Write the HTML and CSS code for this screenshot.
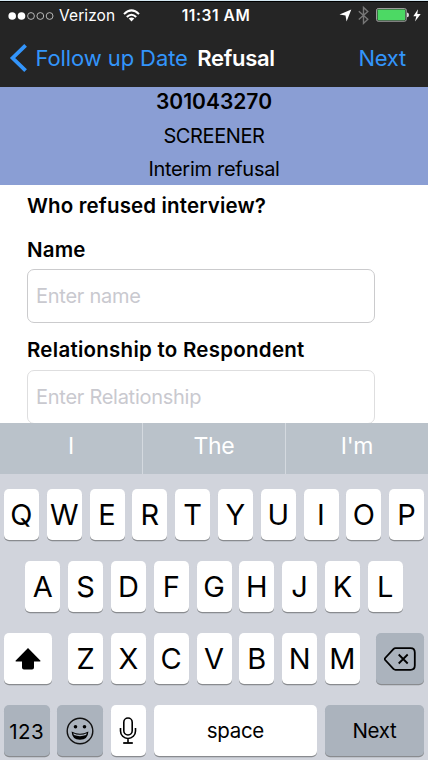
FILE: index.html
```html
<!DOCTYPE html>
<html lang="en">
<head>
<meta charset="utf-8">
<title>Refusal</title>
<link rel="stylesheet" href="styles.css">
</head>
<body>
<header class="header">
  <div class="status">
    <div class="carrier">
      <svg class="signal" width="47" height="10" viewBox="0 0 47 10"><g fill="#fff"><circle cx="4.2" cy="5" r="3.8"/><circle cx="13.5" cy="5" r="3.8"/></g><g fill="none" stroke="#c5c5c5" stroke-width=".9"><circle cx="23" cy="5" r="3.4"/><circle cx="32.3" cy="5" r="3.4"/><circle cx="41.6" cy="5" r="3.4"/></g></svg>
      <span class="carrier-name">Verizon</span>
      <svg class="wifi" width="17" height="13" viewBox="0 0 17 13"><g fill="none" stroke="#fff" stroke-width="2"><path d="M1 5.1Q8.5-2.3 16 5.1"/><path d="M3.8 8Q8.5 3.4 13.2 8"/></g><path d="M5.7 9.6Q8.5 7.3 11.3 9.6L8.5 12.6Z" fill="#fff"/></svg>
    </div>
    <span class="clock">11:31 AM</span>
    <div class="indicators">
      <svg class="location" width="13" height="13" viewBox="0 0 13 13"><path d="M12.3.4L7.6 12.4 6.5 6.6.5 5.5Z" fill="#fff"/></svg>
      <svg class="bluetooth" width="11" height="19" viewBox="0 0 11 19"><path d="M.8 5.2L9.8 13.3 5.5 17.4V1.4L9.8 5.4.8 13.4" fill="none" stroke="#777" stroke-width="1.4"/></svg>
      <svg class="battery" width="33" height="14" viewBox="0 0 33 14"><rect x=".6" y=".6" width="29.6" height="12.6" rx="1.5" fill="#222" stroke="#aaa" stroke-width="1"/><rect x="1.6" y="1.6" width="27.6" height="10.6" rx=".7" fill="#4cd964"/><path d="M31 4.5q2 .3 2 2.4t-2 2.4Z" fill="#ddd"/></svg>
      <svg class="bolt" width="8" height="13" viewBox="0 0 8 13"><path d="M5 .3L.3 7.2H3.3L2 12.5 7.7 5.1H4.3Z" fill="#fff"/></svg>
    </div>
  </div>
  <nav class="nav">
    <a class="back"><svg width="18" height="28" viewBox="0 0 18 28"><path d="M16.6 1.4L3.6 14 16.6 26.6" fill="none" stroke="#3395fb" stroke-width="3.8"/></svg><span class="back-label">Follow up Date</span></a>
    <h1 class="title">Refusal</h1>
    <a class="next">Next</a>
  </nav>
</header>
<section class="banner">
  <strong class="case-id">301043270</strong>
  <span class="stage">SCREENER</span>
  <span class="outcome">Interim refusal</span>
</section>
<main class="form">
  <h2 class="question">Who refused interview?</h2>
  <div class="label label-name">Name</div>
  <div class="field"><span class="hint-name">Enter name</span></div>
  <div class="label label-relation">Relationship to Respondent</div>
  <div class="field field-second"><span class="hint-relation">Enter Relationship</span></div>
</main>
<section class="keyboard">
  <div class="suggestions"><span>I</span><span>The</span><span>I'm</span></div>
  <div class="keys">
    <div class="row"><b>Q</b><b>W</b><b>E</b><b>R</b><b>T</b><b>Y</b><b>U</b><b>I</b><b>O</b><b>P</b></div>
    <div class="row"><b>A</b><b>S</b><b>D</b><b>F</b><b>G</b><b>H</b><b>J</b><b>K</b><b>L</b></div>
    <div class="row row-spread">
      <b class="wide"><svg width="26" height="22" viewBox="0 0 26 22"><path d="M13 0L25.5 12.7Q25.6 13.4 25 13.4H19V19.5Q19 21.5 17 21.5H9Q7 21.5 7 19.5V13.4H1Q.4 13.4.5 12.7Z"/></svg></b>
      <div class="row letters"><b>Z</b><b>X</b><b>C</b><b>V</b><b>B</b><b>N</b><b>M</b></div>
      <b class="wide dark"><svg width="32" height="24" viewBox="0 0 32 24"><g fill="none" stroke="#000" stroke-width="1.8" stroke-linejoin="round"><path d="M11.5 1.2H26.5Q30.8 1.2 30.8 5.5V18.5Q30.8 22.8 26.5 22.8H11.5Q10.3 22.8 9.4 21.9L1.2 13Q.4 12 1.2 11L9.4 2.1Q10.3 1.2 11.5 1.2Z"/><path d="M14.7 7.5L23.7 16.5M23.7 7.5L14.7 16.5"/></g></svg></b>
    </div>
    <div class="row">
      <b class="fn dark numbers">123</b>
      <b class="fn dark"><svg width="28" height="28" viewBox="0 0 28 28"><circle cx="14" cy="14" r="12.8" fill="none" stroke="#111" stroke-width="1.4"/><circle cx="9.5" cy="9.8" r="1.8"/><circle cx="18.5" cy="9.8" r="1.8"/><path d="M5.6 14.4Q14 19 22.4 14.4Q22 22.7 14 22.7T5.6 14.4Z"/><path d="M7.2 16.3Q14 19.3 20.8 16.3L20.1 18.1Q14 20.3 7.9 18.1Z" fill="#abb3bd"/></svg></b>
      <b><svg class="mic" width="18" height="28" viewBox="0 0 18 28"><g fill="none" stroke="#000" stroke-width="1.6"><rect x="4.8" y="1" width="8.4" height="17" rx="4.2"/><path d="M1.5 11V14A7.5 7.5 0 0 0 16.5 14V11M9 21.5V25.8"/><path d="M4.2 26H13.8" stroke-width="1.8"/></g></svg></b>
      <b class="space">space</b>
      <b class="go dark">Next</b>
    </div>
  </div>
</section>
</body>
</html>
```
FILE: styles.css
```css
* { box-sizing: border-box; }
body { margin: 0; width: 428px; height: 760px; overflow: hidden; display: flex; flex-direction: column; background: #fff; color: #000; font-family: Inter, "Liberation Sans", sans-serif; font-size: 20px; line-height: 24px; white-space: nowrap; }
svg { display: block; flex: none; }
h1, h2 { margin: 0; font-weight: 600; }

.header { height: 87px; flex: none; background: #252525; border-top: 1px solid #d5e8f2; color: #fff; }
.status { height: 29px; display: grid; grid-template-columns: 1fr auto 1fr; align-items: center; padding: 0 7px 0 8px; border-top: 1px solid #000; font-size: 15.5px; }
.carrier { display: flex; align-items: center; }
.carrier-name { margin-left: 4px; letter-spacing: .1px; }
.wifi { margin-left: 8px; margin-top: -2px; }
.clock { font-weight: 600; font-size: 15.5px; letter-spacing: .6px; margin-left: 3px; }
.indicators { display: flex; align-items: center; justify-content: flex-end; }
.location { margin-top: -1px; }
.bluetooth { margin-left: 6px; margin-top: -2px; }
.battery { margin-left: 7px; margin-top: -2px; }
.bolt { margin-left: 4px; margin-top: -1px; }
.nav { height: 55px; display: flex; align-items: center; font-size: 22px; padding: 0 22px 0 9px; }
.back { display: flex; align-items: center; color: #3395fb; }
.back-label { margin-left: 8.5px; letter-spacing: -.1px; }
.title { margin-left: 9.5px; font-size: 22px; letter-spacing: -.3px; }
.next { margin-left: auto; color: #3395fb; letter-spacing: -.25px; }

.banner { height: 98px; flex: none; background: #8a9ed4; display: flex; flex-direction: column; align-items: center; gap: 9.5px; padding-top: 3px; }
.case-id { font-size: 21px; font-weight: 600; }
.stage { letter-spacing: -.4px; }
.outcome { letter-spacing: -.3px; }

.form { height: 238px; flex: none; padding: 9px 0 0 27px; display: flex; flex-direction: column; overflow: hidden; }
.question, .label { flex: none; font-size: 20.5px; line-height: 24px; font-weight: 600; letter-spacing: .15px; }
.label-name { margin-top: 19.5px; }
.label-relation { margin-top: 15px; letter-spacing: .26px; }
.field { width: 348px; height: 54px; flex: none; margin-top: 7.5px; border: 1px solid #cbcbcd; border-radius: 7px; display: flex; align-items: center; padding-left: 8px; color: #c9c9cf; letter-spacing: -.27px; }
.field-second { border-color: #dededf; }

.keyboard { flex: 1; background: #d1d4dc; }
.suggestions { height: 51px; display: grid; grid-template-columns: 142px 1fr 143px; background: #bac2ca; color: #fff; font-size: 23px; line-height: 47px; text-align: center; letter-spacing: -.3px; }
.suggestions span + span { border-left: 1px solid #d4d9df; }
.keys { display: flex; flex-direction: column; gap: 21.3px; padding: 14.5px 4px 0; }
.row { display: flex; justify-content: center; gap: 7.8px; }
.row-spread { justify-content: space-between; }
.row b { width: 35px; height: 51px; flex: none; display: flex; align-items: center; justify-content: center; border-radius: 5px; background: #fff; box-shadow: 0 1.2px 0 #898b8f; font-size: 29px; font-weight: 400; padding-top: 1px; }
.row .wide { width: 48px; }
.row .fn { width: 45.6px; }
.row .dark { background: #abb3bd; }
.row .numbers, .row .space, .row .go { font-size: 20.5px; letter-spacing: -.3px; padding-top: 0; }
.row .numbers { letter-spacing: .5px; padding-top: 3px; }
.row .space { flex: 1; }
.row .go { width: 99px; }
```
